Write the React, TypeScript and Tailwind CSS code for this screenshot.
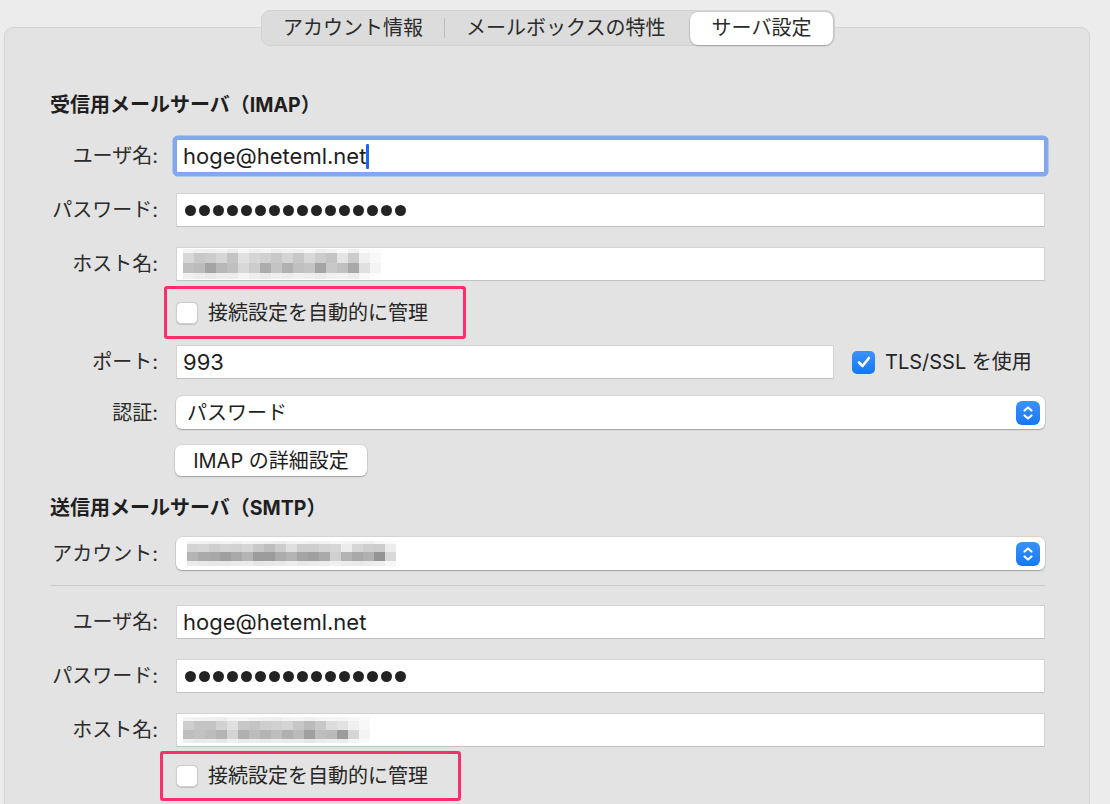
import React from 'react'

const font = "font-['Inter','Noto_Sans_CJK_JP',sans-serif]"

// gray levels for the blurred (mosaic) host / account values
const mosaicA = [
    [244, 240, 238, 242, 236, 246, 240, 244, 238, 242, 240, 246, 238, 242, 248, 240, 250, 252, 255],
    [216, 200, 204, 214, 196, 224, 214, 208, 200, 212, 200, 216, 204, 196, 228, 204, 240, 248, 255],
    [192, 188, 164, 184, 192, 216, 204, 172, 196, 176, 192, 196, 164, 200, 192, 168, 224, 244, 255],
    [240, 236, 232, 238, 236, 244, 238, 234, 238, 236, 240, 238, 234, 240, 242, 236, 248, 252, 255],
]
const mosaicB = [
    [244, 242, 240, 244, 240, 246, 242, 240, 238, 242, 244, 240, 242, 246, 244, 242, 240, 246, 250, 255],
    [212, 214, 206, 212, 210, 214, 200, 190, 204, 222, 206, 206, 212, 214, 236, 214, 206, 204, 236, 255],
    [180, 170, 168, 160, 168, 180, 156, 156, 172, 180, 164, 160, 170, 208, 180, 168, 176, 148, 216, 255],
    [236, 234, 232, 232, 234, 236, 230, 232, 234, 238, 232, 234, 236, 240, 236, 234, 236, 238, 246, 255],
]
const mosaicC = [
    [244, 242, 240, 236, 244, 246, 242, 240, 238, 242, 244, 240, 244, 246, 244, 248, 250, 255, 255],
    [206, 196, 196, 210, 224, 200, 196, 206, 208, 212, 198, 186, 200, 220, 226, 240, 248, 255, 255],
    [190, 194, 188, 180, 212, 176, 188, 180, 190, 176, 186, 160, 190, 186, 156, 214, 244, 255, 255],
    [238, 234, 236, 232, 240, 234, 236, 234, 236, 234, 236, 230, 236, 238, 236, 244, 250, 255, 255],
]

function Mosaic({ rows, cell, heights }: { rows: number[][], cell: number, heights: number[] }) {
    const width = rows[0].length * cell
    const height = heights.reduce((a, b) => a + b, 0)
    let y = 0
    return (
        <svg width={width} height={height} className="block">
            {rows.map((row, r) => {
                const top = y
                y += heights[r]
                return row.map((v, c) => (
                    <rect key={`${r}-${c}`} x={c * cell} y={top} width={cell} height={heights[r]} fill={`rgb(${v},${v},${v})`} />
                ))
            })}
        </svg>
    )
}

function Label({ children }: { children: React.ReactNode }) {
    return (
        <div className="w-[108px] shrink-0 text-right text-[20px] leading-none text-[#2b2b2b]">
            {children}
        </div>
    )
}

function Field({ children, focused = false }: { children: React.ReactNode, focused?: boolean }) {
    return (
        <div
            className={
                focused
                    ? 'flex-1 h-[34px] bg-white border border-[#7fa6ec] rounded-[2px] shadow-[0_0_0_3.5px_#82a9ee] flex items-center px-[6px] text-[22px] text-[#1e1e1e] overflow-hidden'
                    : 'flex-1 h-[34px] bg-white border border-[#d3d3d3] border-b-[#c2c2c2] flex items-center px-[6px] text-[22px] text-[#1e1e1e] overflow-hidden'
            }
        >
            {children}
        </div>
    )
}

function Dots() {
    return (
        <div className="flex gap-[3px] pl-[2px]">
            {Array.from({ length: 16 }).map((_, i) => (
                <span key={i} className="w-[11px] h-[11px] rounded-full bg-[#232323]" />
            ))}
        </div>
    )
}

function Stepper() {
    return (
        <div className="w-[24px] h-[24px] rounded-[6px] bg-gradient-to-b from-[#3a93f9] to-[#1377f3] flex items-center justify-center">
            <svg width="24" height="24" viewBox="0 0 24 24" fill="none" stroke="white" strokeWidth="2.2" strokeLinecap="round" strokeLinejoin="round">
                <path d="M8.5 9.5 L12 6.5 L15.5 9.5" />
                <path d="M8.5 14.5 L12 17.5 L15.5 14.5" />
            </svg>
        </div>
    )
}

function Select({ children }: { children: React.ReactNode }) {
    return (
        <div className="flex-1 h-[33px] bg-white rounded-[6px] shadow-[0_0_0_0.5px_rgba(0,0,0,0.12),0_1px_1.5px_rgba(0,0,0,0.25)] flex items-center justify-between pl-[11px] pr-[5px] text-[20px] text-[#1e1e1e]">
            {children}
            <Stepper />
        </div>
    )
}

function Row({ label, children, className = '' }: { label: string, children: React.ReactNode, className?: string }) {
    return (
        <div className={`flex items-center gap-[18px] ${className}`}>
            <Label>{label}</Label>
            {children}
        </div>
    )
}

function Heading({ jp, latin, className = '' }: { jp: string, latin: string, className?: string }) {
    return (
        <h2 className={`h-[24px] leading-[24px] text-[20px] font-bold text-[#1f1f1f] ${className}`}>
            {jp}（<span className="text-[19.5px]">{latin}</span>）
        </h2>
    )
}

function AutoManage({ box }: { box: string }) {
    return (
        <div className="h-[64px] flex items-start">
            <div className={`${box} border-[3px] border-[#fb2f6c] rounded-[3px] flex items-center gap-[10px]`}>
                <span className="w-[22px] h-[22px] rounded-[5px] bg-white border border-[#cdcdcd] shadow-[0_0.5px_1px_rgba(0,0,0,0.15)]" />
                <span className="text-[20px] text-[#262626] leading-none">接続設定を自動的に管理</span>
            </div>
        </div>
    )
}

export default function App() {
    return (
        <div className={`w-[1110px] h-[804px] overflow-hidden bg-[#ececec] ${font}`}>
            <div className="relative z-10 flex justify-center pt-[10px] pr-[14px]">
                <div className="h-[36px] w-[574px] rounded-[9px] bg-[#dcdcdc] border border-[#d2d2d2] flex items-center text-[20px] text-[#2b2b2b] pl-[21px] pr-[1px]">
                    <span>アカウント情報</span>
                    <span className="w-px h-[20px] bg-[#bdbdbd] mx-[21px]" />
                    <span>メールボックスの特性</span>
                    <div className="ml-auto w-[143px] h-[33px] bg-white rounded-[8px] shadow-[0_0_0_0.5px_rgba(0,0,0,0.12),0_1px_2px_rgba(0,0,0,0.2)] flex items-center justify-center">
                        サーバ設定
                    </div>
                </div>
            </div>

            <div className="-mt-[19px] ml-[4px] w-[1086px] h-[800px] bg-[#e3e3e3] border border-[#d5d5d5] rounded-[9px] pl-[45px] pr-[44px]">
                <Heading jp="受信用メールサーバ" latin="IMAP" className="mt-[65px]" />

                <Row label="ユーザ名:" className="mt-[22px]">
                    <Field focused>
                        <span>hoge@heteml.net</span>
                        <span className="w-[3px] h-[25px] bg-[#1769f0] rounded-[1px]" />
                    </Field>
                </Row>
                <Row label="パスワード:" className="mt-[20px]">
                    <Field><Dots /></Field>
                </Row>
                <Row label="ホスト名:" className="mt-[20px]">
                    <Field>
                        <Mosaic rows={mosaicA} cell={11} heights={[4, 10, 10, 6]} />
                    </Field>
                </Row>

                <AutoManage box="ml-[114px] mt-[5px] w-[302px] h-[53px] pl-[9px]" />

                <Row label="ポート:">
                    <Field>993</Field>
                    <div className="w-[193px] flex items-center gap-[10px]">
                        <span className="w-[23px] h-[23px] rounded-[5px] bg-gradient-to-b from-[#3a93f9] to-[#1377f3] flex items-center justify-center">
                            <svg width="16" height="16" viewBox="0 0 16 16" fill="none" stroke="white" strokeWidth="2.6" strokeLinecap="round" strokeLinejoin="round">
                                <path d="M3 8.5 L6.5 12 L13 4" />
                            </svg>
                        </span>
                        <span className="text-[20px] text-[#262626] whitespace-nowrap">TLS/SSL を使用</span>
                    </div>
                </Row>

                <Row label="認証:" className="mt-[17px]">
                    <Select><span>パスワード</span></Select>
                </Row>

                <div className="mt-[16px] ml-[125px]">
                    <button className="h-[31px] w-[192px] bg-white rounded-[6px] shadow-[0_0_0_0.5px_rgba(0,0,0,0.12),0_1px_1.5px_rgba(0,0,0,0.25)] text-[20px] text-[#1e1e1e] flex items-center justify-center">
                        IMAP の詳細設定
                    </button>
                </div>

                <Heading jp="送信用メールサーバ" latin="SMTP" className="mt-[20px]" />

                <Row label="アカウント:" className="mt-[17px]">
                    <Select>
                        <Mosaic rows={mosaicB} cell={11} heights={[3, 8, 9, 5]} />
                    </Select>
                </Row>

                <div className="mt-[15px] h-px bg-[#cacaca]" />

                <Row label="ユーザ名:" className="mt-[19px]">
                    <Field>hoge@heteml.net</Field>
                </Row>
                <Row label="パスワード:" className="mt-[20px]">
                    <Field><Dots /></Field>
                </Row>
                <Row label="ホスト名:" className="mt-[20px]">
                    <Field>
                        <Mosaic rows={mosaicC} cell={11} heights={[4, 9, 9, 4]} />
                    </Field>
                </Row>

                <AutoManage box="ml-[110px] mt-[4px] w-[301px] h-[50px] pl-[13px]" />
            </div>
        </div>
    )
}
